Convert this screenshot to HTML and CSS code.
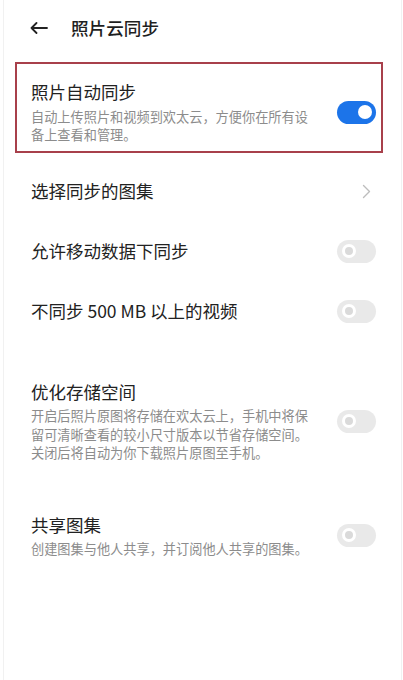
FILE: index.html
```html
<!DOCTYPE html>
<html lang="zh-CN">
<head>
<meta charset="utf-8">
<title>照片云同步</title>
<link rel="stylesheet" href="styles.css">
</head>
<body>
<div class="page">
  <header class="header">
    <svg class="back" width="18" height="12" viewBox="0 0 18 12" aria-hidden="true">
      <path d="M17 6H1.5M6.5 1L1.5 6l5 5" fill="none" stroke="#222" stroke-width="1.8" stroke-linecap="round" stroke-linejoin="round"/>
    </svg>
    <h1 class="title">照片云同步</h1>
  </header>

  <section class="card">
    <div class="text">
      <div class="label">照片自动同步</div>
      <div class="desc">自动上传照片和视频到欢太云，方便你在所有设备上查看和管理。</div>
    </div>
    <span class="switch on"><span class="knob"></span></span>
  </section>

  <div class="rows">
    <div class="row">
      <div class="label">选择同步的图集</div>
      <svg class="chev" width="9" height="15" viewBox="0 0 9 15" aria-hidden="true">
        <path d="M1.5 1.5l6 6-6 6" fill="none" stroke="#bdbdbd" stroke-width="1.4" stroke-linecap="round" stroke-linejoin="round"/>
      </svg>
    </div>
    <div class="row">
      <div class="label">允许移动数据下同步</div>
      <span class="switch"><span class="knob"></span></span>
    </div>
    <div class="row">
      <div class="label">不同步 500 MB 以上的视频</div>
      <span class="switch"><span class="knob"></span></span>
    </div>
  </div>

  <div class="block first">
    <div class="text">
      <div class="label">优化存储空间</div>
      <div class="desc">开启后照片原图将存储在欢太云上，手机中将保留可清晰查看的较小尺寸版本以节省存储空间。关闭后将自动为你下载照片原图至手机。</div>
    </div>
    <span class="switch"><span class="knob"></span></span>
  </div>

  <div class="block second">
    <div class="text">
      <div class="label">共享图集</div>
      <div class="desc">创建图集与他人共享，并订阅他人共享的图集。</div>
    </div>
    <span class="switch"><span class="knob"></span></span>
  </div>
</div>
</body>
</html>
```

FILE: styles.css
```css
* { box-sizing: border-box; }

html, body {
  margin: 0;
  padding: 0;
  background: #ffffff;
}

body {
  font-family: "Noto Sans CJK SC", "Noto Sans", Roboto, sans-serif;
  color: #222222;
}

.page {
  margin: 0 1px 0 3px;
  min-height: 680px;
  border-left: 1px solid #f1f1f1;
  border-right: 1px solid #f1f1f1;
}

.header {
  height: 56px;
  display: flex;
  align-items: center;
  padding-left: 26px;
}

.back { display: block; flex: none; }

.title {
  margin: 0 0 0 23px;
  font-size: 17.6px;
  font-weight: 500;
  line-height: 24px;
  color: #1f1f1f;
}

.card {
  margin: 6px 18px 0 11px;
  border: 2px solid #a8404b;
  padding: 16px 5px 7px 14px;
  display: flex;
  align-items: center;
  justify-content: space-between;
}

.text {
  flex: 1;
  min-width: 0;
  padding-right: 28px;
}

.label {
  font-size: 17.5px;
  line-height: 24px;
  color: #222222;
}

.desc {
  margin-top: 3px;
  font-size: 13.2px;
  line-height: 18.5px;
  color: #8c8c8c;
}

.card .desc { margin-top: 4px; line-height: 18px; }

.rows { margin-top: 8px; }

.row {
  height: 60px;
  display: flex;
  align-items: center;
  justify-content: space-between;
  padding: 0 25px 0 27px;
}

.chev { display: block; margin-right: 5px; }

.block {
  display: flex;
  align-items: center;
  justify-content: space-between;
  padding: 0 25px 0 27px;
}

.block.first { padding-top: 39px; }
.block.second { padding-top: 50px; }

.switch {
  flex: none;
  position: relative;
  width: 39px;
  height: 23px;
  border-radius: 12px;
  background: #e9e9e9;
}

.switch .knob {
  position: absolute;
  top: 4.5px;
  left: 5px;
  width: 14px;
  height: 14px;
  border-radius: 50%;
  background: #dadada;
  border: 3px solid #ffffff;
}

.switch.on { background: #1c74e9; }

.switch.on .knob {
  left: auto;
  right: 4px;
  background: #ffffff;
  border: none;
}
```
